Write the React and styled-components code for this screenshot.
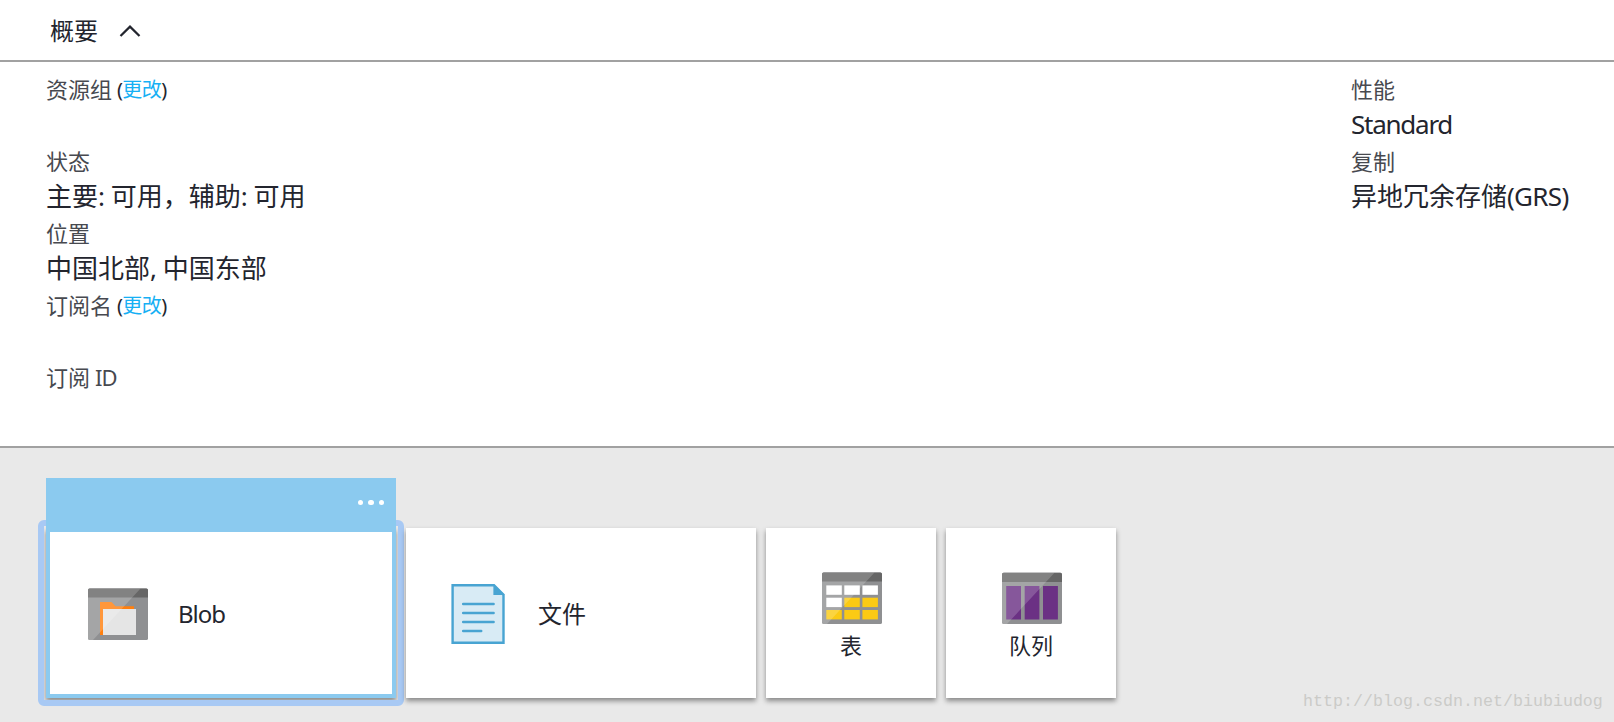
import styled, { createGlobalStyle, css } from "styled-components";

const GlobalStyle = createGlobalStyle`
  body {
    margin: 0;
    background-color: #ffffff;
    font-family: "Noto Sans CJK SC", sans-serif;
    color: #23252e;
  }
`;

const Page = styled.div`
  display: flex;
  flex-direction: column;
  height: 722px;
  overflow: hidden;
`;

const Header = styled.header`
  display: flex;
  align-items: center;
  flex: none;
  height: 60px;
  padding-left: 50px;
  border-bottom: 2px solid #a1a1a1;
`;

const Title = styled.h1`
  margin: 0 20px 0 0;
  padding-bottom: 1px;
  font-size: 24px;
  line-height: 36px;
  font-weight: 400;
`;

const Essentials = styled.section`
  display: flex;
  justify-content: space-between;
  flex: none;
  box-sizing: border-box;
  height: 386px;
  padding: 8px 0 0 46px;
  border-bottom: 2px solid #a1a1a1;
`;

const Column = styled.dl`
  margin: 0;
  &.right {
    width: 263px;
  }
`;

const Label = styled.dt`
  height: 36px;
  line-height: 36px;
  font-size: 22px;
  color: #47494f;
  white-space: nowrap;
`;

const Value = styled.dd`
  height: 36px;
  margin: 0;
  line-height: 34px;
  font-size: 26px;
  white-space: nowrap;
`;

const Latin = styled.span`
  font-family: "Noto Sans", sans-serif;
  letter-spacing: ${(props) => props.$spacing || "-0.5px"};
`;

const Change = styled.span`
  position: relative;
  top: -1px;
  margin-left: 5px;
  font-size: 20px;
  color: #23252e;
`;

const Link = styled.a`
  color: #16b0f4;
  letter-spacing: -0.4px;
`;

const Services = styled.section`
  display: flex;
  align-items: flex-start;
  justify-content: space-between;
  flex: 1;
  padding-left: 46px;
  background-color: #e9e9e9;
`;

const Tiles = styled.div`
  display: flex;
  gap: 10px;
  padding-top: 80px;
`;

const Tile = styled.div`
  position: relative;
  display: flex;
  align-items: center;
  box-sizing: border-box;
  width: 350px;
  height: 170px;
  padding: 2px 0 0 42px;
  background-color: #ffffff;
  box-shadow: 0 3px 5px rgba(0, 0, 0, 0.42);

  ${(props) =>
    props.$small &&
    css`
      flex-direction: column;
      width: 170px;
      padding: 40px 0 0;
    `}

  ${(props) =>
    props.$selected &&
    css`
      padding: 2px 0 0 38px;
      border: 4px solid #8bcaef;
    `}
`;

const FocusRing = styled.div`
  position: absolute;
  inset: -12px;
  border: 6px solid #a8c9f4;
  border-radius: 6px;
`;

const TileMenu = styled.div`
  position: absolute;
  left: -4px;
  right: -4px;
  bottom: 162px;
  display: flex;
  justify-content: flex-end;
  align-items: center;
  gap: 5px;
  box-sizing: border-box;
  height: 54px;
  padding: 0 12px 5px 0;
  background-color: #8bcaef;
`;

const Dot = styled.span`
  width: 5.5px;
  height: 5.5px;
  border-radius: 50%;
  background-color: #ffffff;
`;

const TileName = styled.div`
  margin-left: 30px;
  padding-bottom: 2px;
  font-size: 24px;
  line-height: 36px;

  &.small {
    margin: 0;
    font-size: 22px;
    line-height: 32px;
  }
`;

const Icon = styled.svg`
  display: block;
  flex: none;

  ${Tile} > &.nudge {
    margin-left: 2px;
  }
`;

const Watermark = styled.div`
  align-self: flex-end;
  width: 311px;
  padding-bottom: 8px;
  font-family: "Liberation Mono", monospace;
  font-size: 16.67px;
  line-height: 24px;
  color: #cbcbc8;
`;

function WindowFrame({ top = 4.4, className, children }) {
  return (
    <Icon className={className} width="60" height="60" viewBox="0 0 60 60">
      <rect x="0" y={top} width="60" height={56 - top} rx="1.6" fill="#8f9092" />
      <path
        d={`M0 ${top + 9.2}V${top + 1.6}a1.6 1.6 0 0 1 1.6-1.6h56.8a1.6 1.6 0 0 1 1.6 1.6v7.6z`}
        fill="#666666"
      />
      {children}
      <path
        d={`M1.6 ${top}H52.5L5 56H1.6A1.6 1.6 0 0 1 0 54.4V${top + 1.6}a1.6 1.6 0 0 1 1.6-1.6z`}
        fill="#ffffff"
        fillOpacity="0.19"
      />
    </Icon>
  );
}

function BlobIcon() {
  return (
    <WindowFrame>
      <path d="M12 51V18h11.5l4 4.2H46V51z" fill="#ff7f0e" />
      <path d="M15 25h33v26H15z" fill="#e5e5e5" />
    </WindowFrame>
  );
}

function FileIcon() {
  return (
    <Icon width="60" height="60" viewBox="0 0 60 60">
      <path
        d="M4.6 1.2H46L55.5 10.8V58.8H4.6z"
        fill="#d8ebf5"
        stroke="#48a4d2"
        strokeWidth="2.4"
      />
      <path d="M45.4 0L56.7 11H45.4z" fill="#48a4d2" />
      <path
        d="M15.2 20H45.6M15.2 29H45.6M15.2 38H45.6M15.2 47H33.2"
        stroke="#48a4d2"
        strokeWidth="2.5"
        strokeLinecap="round"
      />
    </Icon>
  );
}

const columns = [4.3, 22.3, 40.4];
const rows = [17.4, 29.7, 42];

function TableIcon() {
  return (
    <WindowFrame className="nudge">
      {rows.map((y, row) =>
        columns.map((x, col) => (
          <rect
            key={`${row}-${col}`}
            x={x}
            y={y}
            width="15.5"
            height="9.4"
            fill={row === 0 || (row === 1 && col === 0) ? "#ffffff" : "#fbca14"}
          />
        ))
      )}
    </WindowFrame>
  );
}

function QueueIcon() {
  return (
    <WindowFrame className="nudge" top={4.8}>
      <path d="M4.2 18H19V51.6H4.2zM22.7 18H37.4V51.6H22.7zM41 18H55.9V51.6H41z" fill="#6b3184" />
    </WindowFrame>
  );
}

function ChangeLink() {
  return (
    <Change>
      <Latin $spacing="-0.9px">(</Latin>
      <Link>更改</Link>
      <Latin>)</Latin>
    </Change>
  );
}

function App() {
  return (
    <Page>
      <GlobalStyle />
      <Header>
        <Title>概要</Title>
        <Icon width="24" height="16" viewBox="0 0 24 16">
          <path d="M2.5 14L12 4.6L21.5 14" fill="none" stroke="#23252e" strokeWidth="2.2" />
        </Icon>
      </Header>
      <Essentials>
        <Column>
          <Label>
            资源组
            <ChangeLink />
          </Label>
          <Value />
          <Label>状态</Label>
          <Value>
            主要<Latin>: </Latin>可用，辅助<Latin>: </Latin>可用
          </Value>
          <Label>位置</Label>
          <Value>
            中国北部<Latin>, </Latin>中国东部
          </Value>
          <Label>
            订阅名
            <ChangeLink />
          </Label>
          <Value />
          <Label>
            订阅<Latin $spacing="-0.8px"> ID</Latin>
          </Label>
        </Column>
        <Column className="right">
          <Label>性能</Label>
          <Value>
            <Latin $spacing="-1.25px">Standard</Latin>
          </Value>
          <Label>复制</Label>
          <Value>
            异地冗余存储<Latin $spacing="-0.7px">(GRS)</Latin>
          </Value>
        </Column>
      </Essentials>
      <Services>
        <Tiles>
          <Tile $selected>
            <FocusRing />
            <TileMenu>
              <Dot />
              <Dot />
              <Dot />
            </TileMenu>
            <BlobIcon />
            <TileName>
              <Latin $spacing="-1px">Blob</Latin>
            </TileName>
          </Tile>
          <Tile>
            <FileIcon />
            <TileName>文件</TileName>
          </Tile>
          <Tile $small>
            <TableIcon />
            <TileName className="small">表</TileName>
          </Tile>
          <Tile $small>
            <QueueIcon />
            <TileName className="small">队列</TileName>
          </Tile>
        </Tiles>
        <Watermark>http://blog.csdn.net/biubiudog</Watermark>
      </Services>
    </Page>
  );
}

export default App;
